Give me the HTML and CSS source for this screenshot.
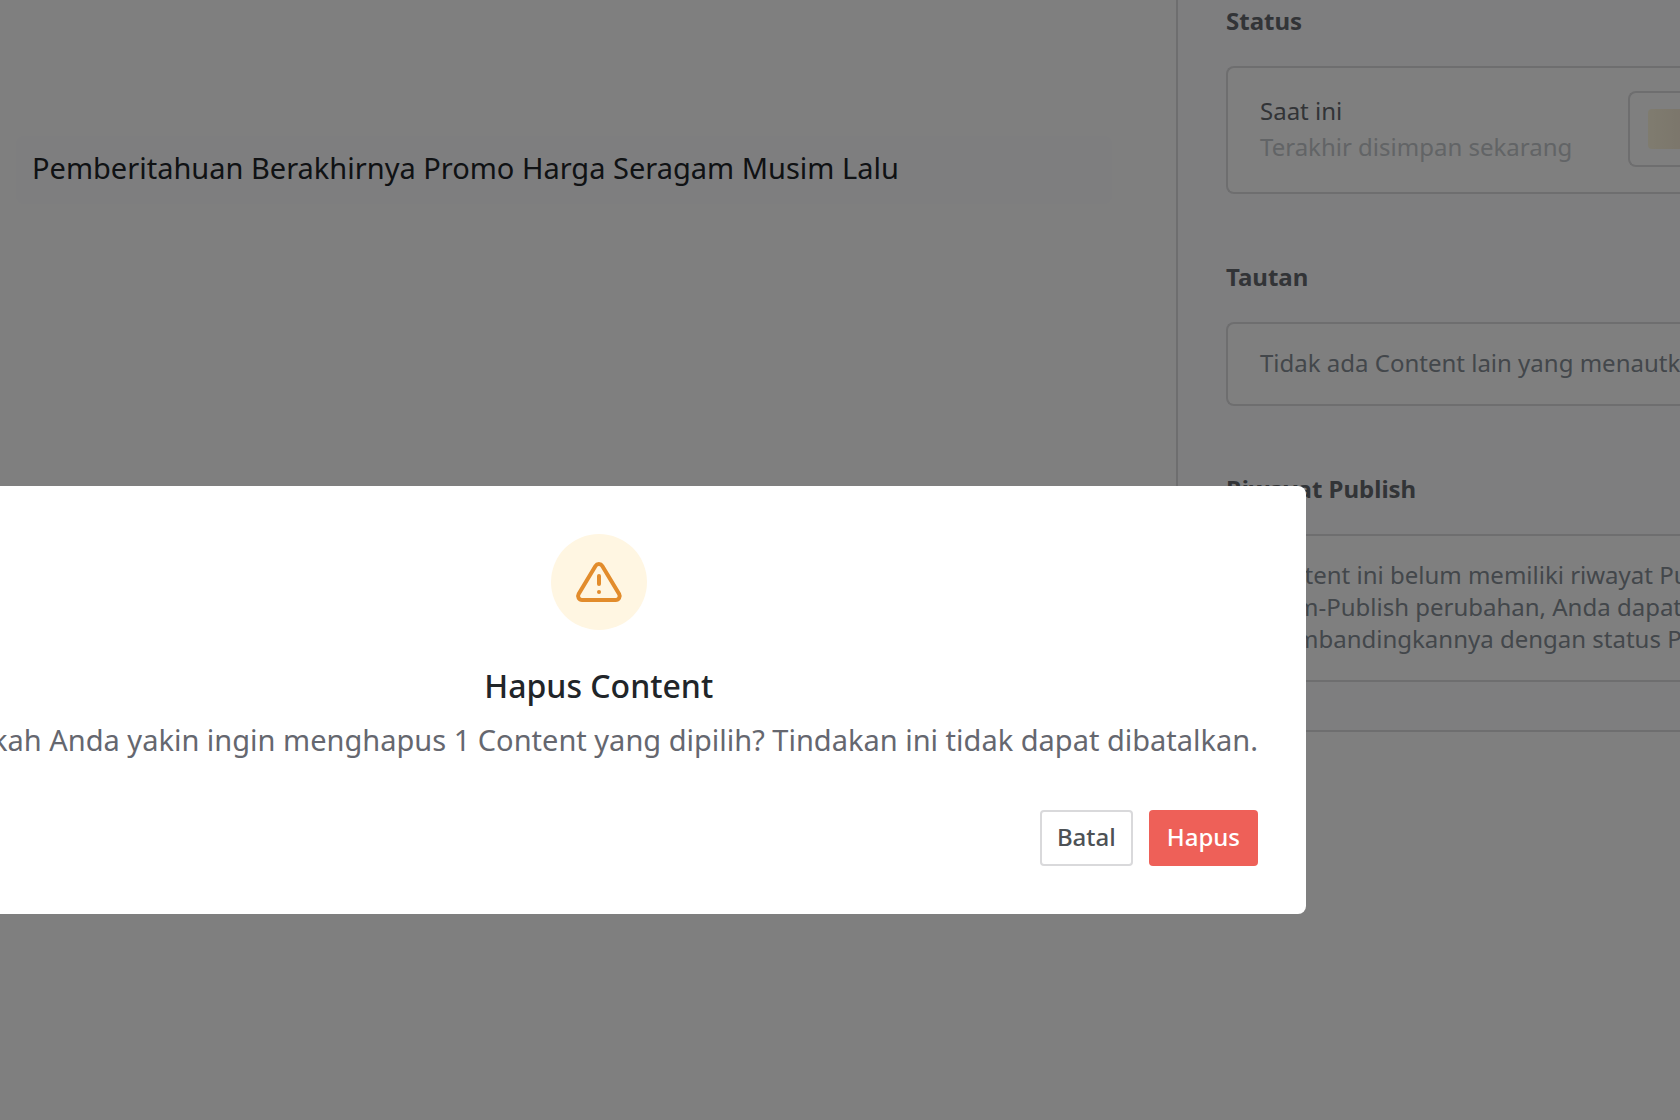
FILE: index.html
```html
<!DOCTYPE html>
<html lang="id">
<head>
    <meta charset="UTF-8">
    <meta name="viewport" content="width=device-width, initial-scale=1.0">
    <title>Hapus Content</title>
    <link rel="stylesheet" href="styles.css">
</head>
<body>
    <div class="page">
        <main class="editor">
            <input class="title-input" type="text" aria-label="Judul" value="Pemberitahuan Berakhirnya Promo Harga Seragam Musim Lalu">
        </main>

        <aside class="sidebar">
            <section class="panel">
                <h2>Status</h2>
                <div class="card status-card">
                    <div class="status-text">
                        <p class="status-label">Saat ini</p>
                        <p class="status-time">Terakhir disimpan sekarang</p>
                    </div>
                    <div class="status-box"><span class="badge"></span></div>
                </div>
            </section>

            <section class="panel">
                <h2>Tautan</h2>
                <div class="card">
                    <p>Tidak ada Content lain yang menautkan</p>
                </div>
            </section>

            <section class="panel">
                <h2>Riwayat Publish</h2>
                <div class="card">
                    <p>Content ini belum memiliki riwayat Publish.<br>
                    mem-Publish perubahan, Anda dapat<br>
                    membandingkannya dengan status Publish</p>
                </div>
            </section>
        </aside>
    </div>

    <div class="overlay">
        <div class="modal" role="dialog" aria-modal="true" aria-labelledby="modal-title">
            <div class="modal-icon">
                <svg width="48" height="48" viewBox="0 0 24 24" fill="none" stroke="currentColor" stroke-width="2" stroke-linecap="round" stroke-linejoin="round" aria-hidden="true">
                    <path d="M12 9v4"/>
                    <path d="M12 17h.01"/>
                    <path d="M10.24 3.957l-8.422 14.06a1.989 1.989 0 0 0 1.7 2.983h16.845a1.989 1.989 0 0 0 1.7 -2.983l-8.423 -14.06a1.989 1.989 0 0 0 -3.4 0z"/>
                </svg>
            </div>
            <h1 id="modal-title">Hapus Content</h1>
            <p class="modal-text">Apakah Anda yakin ingin menghapus 1 Content yang dipilih? Tindakan ini tidak dapat dibatalkan.</p>
            <div class="modal-actions">
                <button class="button cancel-btn" type="button">Batal</button>
                <button class="button delete-btn" type="button">Hapus</button>
            </div>
        </div>
    </div>
</body>
</html>
```

FILE: styles.css
```css
* {
    margin: 0;
    padding: 0;
    box-sizing: border-box;
    font-family: "Noto Sans", sans-serif;
}

body {
    background: #ffffff;
    min-height: 100vh;
    overflow: hidden;
}

.page {
    display: flex;
    align-items: flex-start;
}

.editor {
    flex: 1;
    min-width: 0;
    padding: 136px 64px 0 16px;
}

.title-input {
    width: 100%;
    height: 68px;
    padding: 0 16px 6px;
    border: none;
    border-radius: 8px;
    background: #fcfcff;
    color: #212529;
    font-size: 29px;
}

/* The cards run past the right edge of the window */
.sidebar {
    width: 30%;
    padding: 2px 0 48px 48px;
    background: #fcfcff;
    border-left: 2px solid #dcdcde;
    border-bottom: 2px solid #dcdcde;
    overflow: hidden;
}

.panel + .panel {
    margin-top: 64px;
}

.panel h2 {
    margin-bottom: 26px;
    font-size: 24px;
    line-height: 38px;
    font-weight: 700;
    color: #65696e;
}

.card {
    padding: 23px 0 25px 32px;
    background: #ffffff;
    border: 2px solid #dcdcde;
    border-right: none;
    border-radius: 8px 0 0 8px;
    font-size: 24px;
    line-height: 32px;
    color: #868e96;
    white-space: nowrap;
    overflow: hidden;
}

.status-card {
    display: flex;
    align-items: center;
    justify-content: space-between;
    line-height: 36px;
}

.status-label {
    color: #65696e;
}

.status-time {
    color: #c4c8cc;
}

.status-box {
    width: 52px;
    padding: 16px 0 16px 18px;
    border: 2px solid #dcdcde;
    border-right: none;
    border-radius: 8px 0 0 8px;
}

.badge {
    display: block;
    height: 40px;
    border-radius: 4px 0 0 4px;
    background: linear-gradient(90deg, #fff8df, #f8edd8);
}

.overlay {
    position: fixed;
    inset: 0;
    display: flex;
    align-items: center;
    justify-content: flex-end;
    padding: 280px 374px 0 0;
    background: rgba(0, 0, 0, 0.5);
    overflow: hidden;
}

.modal {
    flex-shrink: 0;
    display: flex;
    flex-direction: column;
    align-items: center;
    padding: 48px;
    background: #ffffff;
    border-radius: 8px;
}

.modal-icon {
    display: flex;
    align-items: center;
    justify-content: center;
    width: 96px;
    height: 96px;
    border-radius: 50%;
    background: #fff6e2;
    color: #e28c2c;
}

.modal h1 {
    margin-top: 32px;
    font-size: 32px;
    line-height: 48px;
    font-weight: 500;
    color: #212529;
}

.modal-text {
    margin-top: 10px;
    font-size: 29px;
    line-height: 40px;
    color: #65676f;
    white-space: nowrap;
}

.modal-actions {
    align-self: flex-end;
    display: flex;
    gap: 16px;
    margin-top: 50px;
}

.button {
    height: 56px;
    padding: 0 16px 4px;
    border: 2px solid transparent;
    border-radius: 4px;
    font-size: 24px;
    font-weight: 500;
    cursor: pointer;
}

.cancel-btn {
    padding: 0 15px 4px;
    background: #ffffff;
    border-color: #d9d9db;
    color: #4d5155;
}

.delete-btn {
    background: #ee6058;
    color: #ffffff;
}
```
